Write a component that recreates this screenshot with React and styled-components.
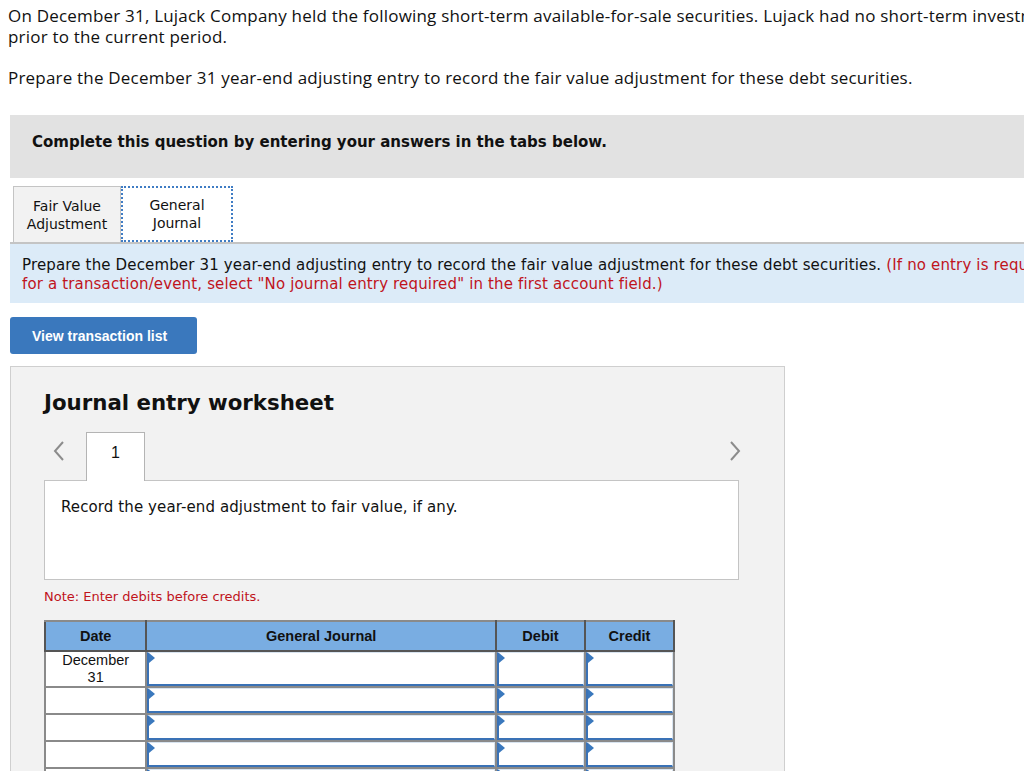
import React from "react";
import styled, { createGlobalStyle } from "styled-components";

const Global = createGlobalStyle`
  html, body { margin: 0; padding: 0; background: #fff; overflow: hidden; }
  body { width: 1024px; }
`;

const Page = styled.div`
  width: 1160px;
  padding: 5px 0 0 8px;
  box-sizing: border-box;
`;

const Intro = styled.p`
  margin: 0 0 20px 0;
  font-family: "Open Sans", "Liberation Sans", Arial, sans-serif;
  font-size: 17px;
  letter-spacing: 0.2px;
  line-height: 21px;
  color: #111;
`;

const Instructions = styled.div`
  margin: 27px 0 0 2px;
  background: #e2e2e2;
  height: 63px;
  box-sizing: border-box;
  display: flex;
  align-items: center;
  padding: 0 0 10px 22px;
  font-family: "DejaVu Sans", Verdana, sans-serif;
  font-weight: bold;
  font-size: 15px;
  color: #111;
`;

const TabRow = styled.div`
  display: flex;
  margin: 8px 0 0 5px;
  align-items: flex-end;
`;

const Tab = styled.div`
  height: 56px;
  box-sizing: border-box;
  display: flex;
  align-items: center;
  justify-content: center;
  text-align: center;
  font-family: "DejaVu Sans", Verdana, sans-serif;
  font-size: 14px;
  line-height: 18px;
  color: #111;
  width: ${(p) => p.$w}px;
  background: ${(p) => (p.$active ? "#fff" : "#f2f2f2")};
  border: ${(p) => (p.$active ? "2px dotted #3f7cc4" : "1px solid #c4c4c4")};
  border-bottom: ${(p) => (p.$active ? "2px dotted #3f7cc4" : "none")};
`;

const InfoBox = styled.div`
  margin-left: 2px;
  background: #dcebf8;
  border-top: 2px solid #c4c4c4;
  padding: 12px 0 9px 12px;
  font-family: "DejaVu Sans", Verdana, sans-serif;
  font-size: 15px;
  letter-spacing: 0.15px;
  line-height: 19px;
  color: #111;
`;

const Red = styled.span`
  color: #c0141c;
`;

const ViewButton = styled.button`
  margin: 14px 0 0 2px;
  width: 187px;
  height: 37px;
  border: none;
  border-radius: 3px;
  background: #3a78bd;
  color: #fff;
  font-family: "Liberation Sans", Arial, sans-serif;
  font-weight: bold;
  font-size: 14px;
  text-align: left;
  padding-left: 22px;
  display: block;
`;

const Worksheet = styled.div`
  margin: 12px 0 0 2px;
  width: 775px;
  height: 420px;
  box-sizing: border-box;
  background: #f2f2f2;
  border: 1px solid #cfcfcf;
  padding: 22px 45px 0 33px;
`;

const Title = styled.h2`
  margin: 0;
  font-family: "DejaVu Sans", Verdana, sans-serif;
  font-weight: bold;
  font-size: 21.3px;
  line-height: 28px;
  color: #111;
`;

const NavRow = styled.div`
  display: flex;
  align-items: flex-end;
  margin-top: 15px;
  height: 48px;
  position: relative;
`;

const Arrow = styled.div`
  position: absolute;
  top: 8px;
  ${(p) => (p.$right ? "right: -7px;" : "left: 4px;")}
  width: 22px;
  height: 22px;
  display: flex;
  align-items: center;
  justify-content: center;
`;

const EntryTab = styled.div`
  margin-left: 42px;
  width: 59px;
  height: 49px;
  box-sizing: border-box;
  background: #fff;
  border: 1px solid #b4b4b4;
  border-bottom: none;
  display: flex;
  justify-content: center;
  padding-top: 11px;
  font-family: "Liberation Sans", Arial, sans-serif;
  font-size: 16px;
  color: #111;
  position: relative;
  z-index: 1;
  margin-bottom: -1px;
`;

const RecordBox = styled.div`
  height: 100px;
  box-sizing: border-box;
  background: #fff;
  border: 1px solid #c4c4c4;
  padding: 17px 16px;
  font-family: "DejaVu Sans", Verdana, sans-serif;
  font-size: 15px;
  letter-spacing: 0.1px;
  color: #111;
`;

const Note = styled.div`
  margin-top: 9px;
  font-family: "DejaVu Sans", Verdana, sans-serif;
  font-size: 13px;
  color: #c0141c;
`;

const Table = styled.table`
  margin-top: 16px;
  border-collapse: collapse;
  width: 631px;
  font-family: "Liberation Sans", Arial, sans-serif;
  font-size: 14.5px;
  color: #111;
`;

const Th = styled.th`
  background: #79ade2;
  height: 28px;
  border: 2px solid #555;
  border-top-color: #8a8a8a;
  font-weight: bold;
  text-align: center;
  padding: 0;
  width: ${(p) => p.$w}px;
`;

const DateCell = styled.td`
  background: #fff;
  border: 2px solid #8a8a8a;
  text-align: center;
  vertical-align: middle;
  padding: 0;
  height: ${(p) => p.$h}px;
  line-height: 17px;
`;

const InputCell = styled.td`
  border: 2px solid #8a8a8a;
  padding: 0;
  background: #fff;
  height: ${(p) => p.$h}px;
`;

const Field = styled.div`
  position: relative;
  height: 100%;
  min-height: ${(p) => p.$h}px;
  box-sizing: border-box;
  border-left: 2px solid #3a72b6;
  border-bottom: 2px solid #3a72b6;
  border-top: 1px solid #d8e4f0;
  border-right: 1px solid #d8e4f0;
  background: #fff;
  &::before {
    content: "";
    position: absolute;
    left: 0;
    top: 0;
    border-top: 5px solid transparent;
    border-bottom: 5px solid transparent;
    border-left: 6px solid #3a78bd;
  }
`;

const Chevron = ({ right }) => (
  <svg width="14" height="22" viewBox="0 0 14 22">
    <path
      d={right ? "M3 2 L11 11 L3 20" : "M11 2 L3 11 L11 20"}
      fill="none"
      stroke="#8c8c8c"
      strokeWidth="2"
    />
  </svg>
);

const rows = [
  { date: ["December", "31"], h: 33 },
  { date: null, h: 25 },
  { date: null, h: 25 },
  { date: null, h: 25 },
  { date: null, h: 25 },
];

export default function App() {
  return (
    <Page>
      <Global />
      <Intro>
        On December 31, Lujack Company held the following short-term available-for-sale securities. Lujack had no short-term investments
        <br />
        prior to the current period.
      </Intro>
      <Intro>
        Prepare the December 31 year-end adjusting entry to record the fair value adjustment for these debt securities.
      </Intro>
      <Instructions>Complete this question by entering your answers in the tabs below.</Instructions>
      <TabRow>
        <Tab $w={108}>
          Fair Value
          <br />
          Adjustment
        </Tab>
        <Tab $w={112} $active>
          General
          <br />
          Journal
        </Tab>
      </TabRow>
      <InfoBox>
        Prepare the December 31 year-end adjusting entry to record the fair value adjustment for these debt securities.{" "}
        <Red>(If no entry is required
          <br />
          for a transaction/event, select "No journal entry required" in the first account field.)</Red>
      </InfoBox>
      <ViewButton>View transaction list</ViewButton>
      <Worksheet>
        <Title>Journal entry worksheet</Title>
        <NavRow>
          <Arrow>
            <Chevron />
          </Arrow>
          <EntryTab>1</EntryTab>
          <Arrow $right>
            <Chevron right />
          </Arrow>
        </NavRow>
        <RecordBox>Record the year-end adjustment to fair value, if any.</RecordBox>
        <Note>Note: Enter debits before credits.</Note>
        <Table>
          <thead>
            <tr>
              <Th $w={100}>Date</Th>
              <Th $w={354}>General Journal</Th>
              <Th $w={88}>Debit</Th>
              <Th $w={88}>Credit</Th>
            </tr>
          </thead>
          <tbody>
            {rows.map((r, i) => (
              <tr key={i}>
                <DateCell $h={r.h}>
                  {r.date ? (
                    <>
                      {r.date[0]}
                      <br />
                      {r.date[1]}
                    </>
                  ) : null}
                </DateCell>
                {[0, 1, 2].map((c) => (
                  <InputCell key={c} $h={r.h}>
                    <Field $h={r.h} />
                  </InputCell>
                ))}
              </tr>
            ))}
          </tbody>
        </Table>
      </Worksheet>
    </Page>
  );
}
